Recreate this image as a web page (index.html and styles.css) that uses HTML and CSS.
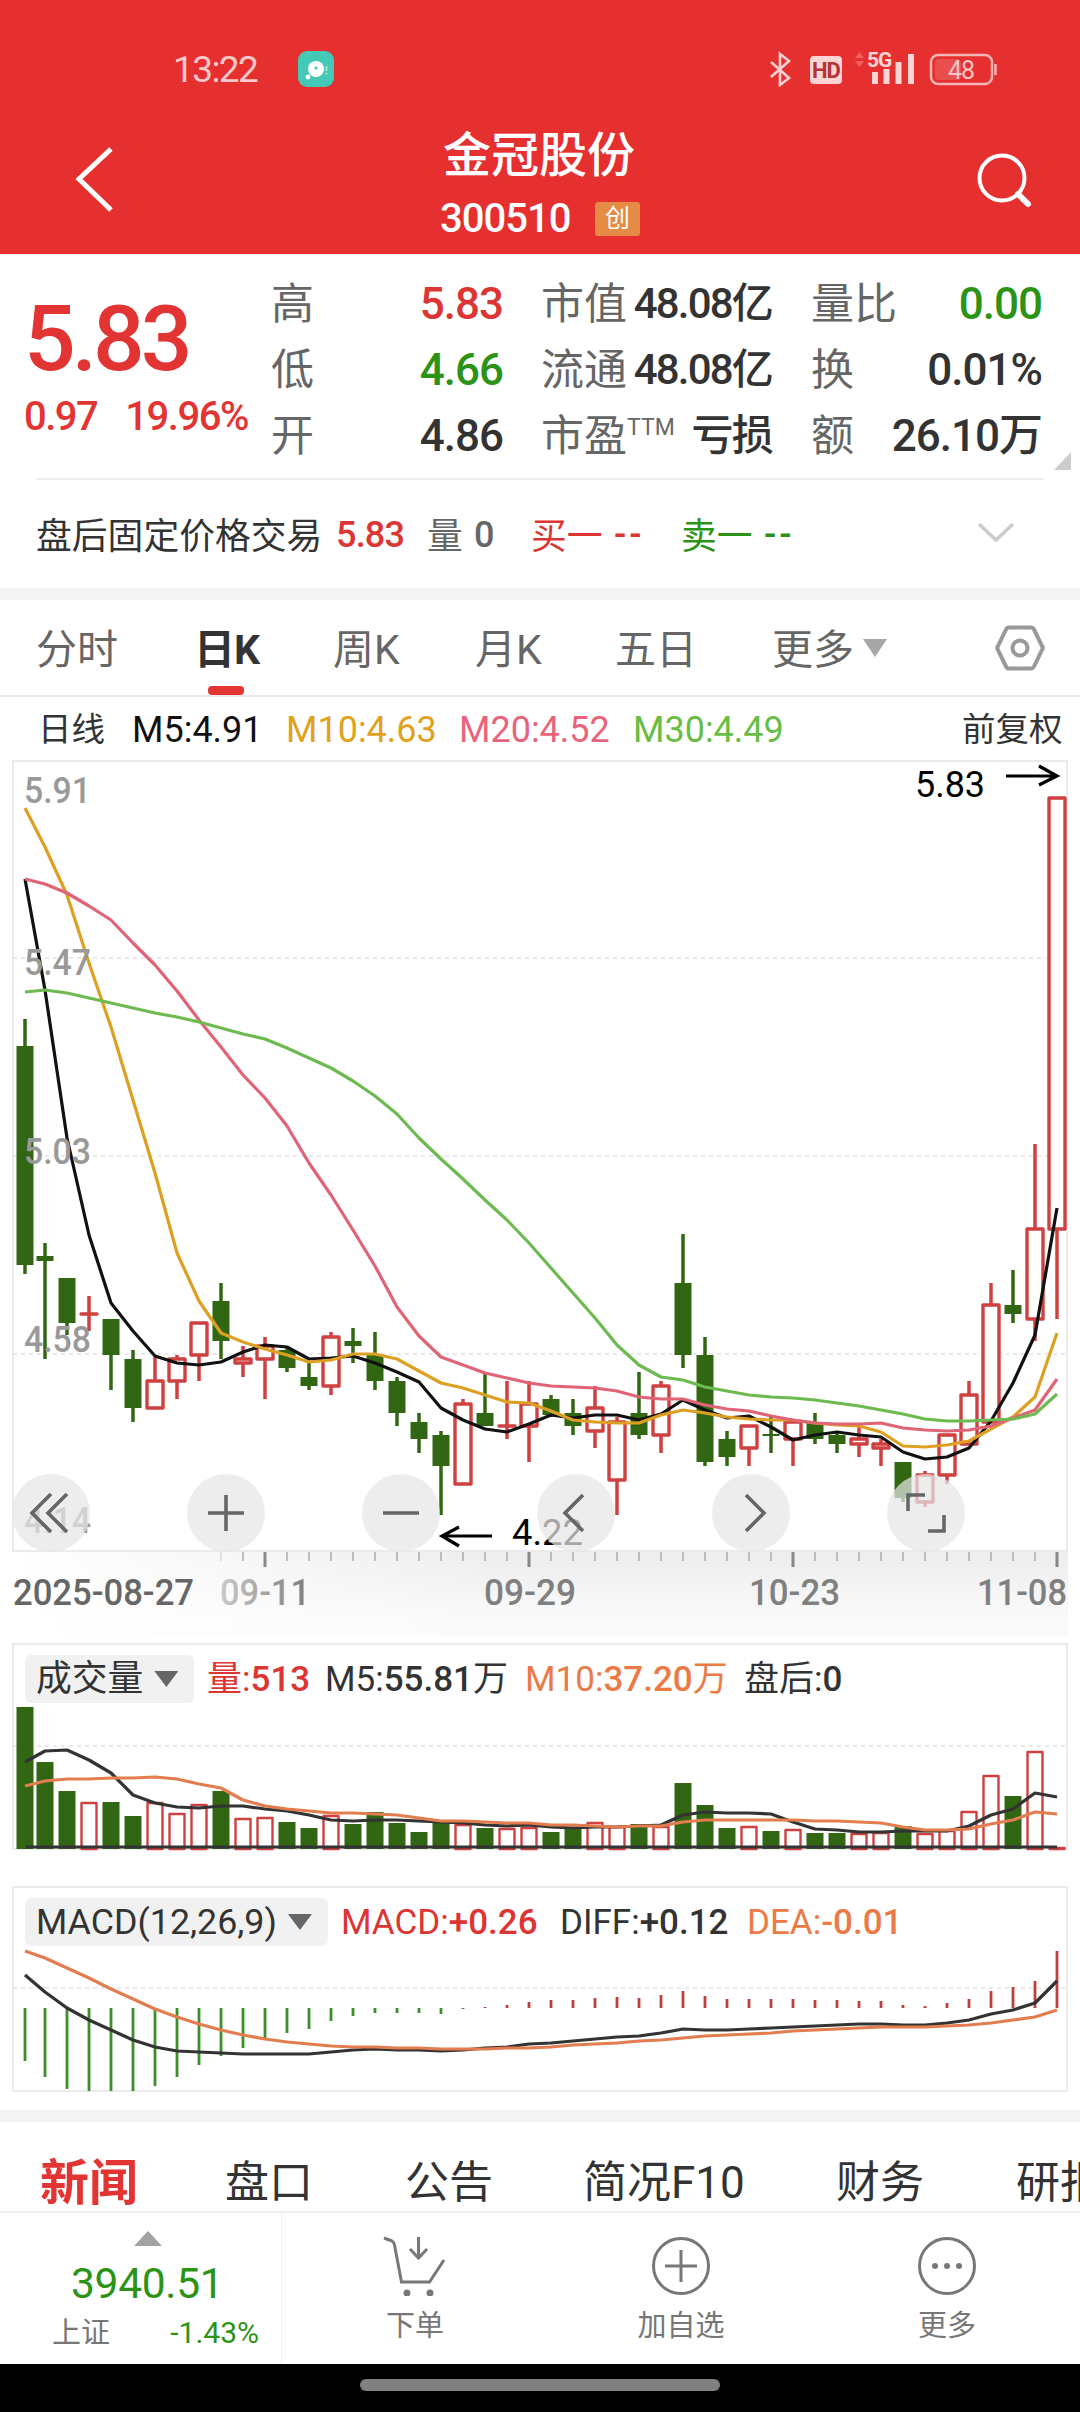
FILE: index.html
```html
<!DOCTYPE html>
<html lang="zh-CN">
<head>
  <meta charset="UTF-8">
  <title>金冠股份 300510</title>
  <link rel="stylesheet" href="styles.css">
</head>
<body>
  <header class="header">
    <div class="status">
      <span class="time">13:22</span>
      <svg class="app-icon" width="36" height="36" viewBox="0 0 36 36">
        <rect width="36" height="36" rx="9" fill="#43c9b6"/>
        <circle cx="18" cy="18" r="8" fill="#fff"/>
        <circle cx="18" cy="17" r="1.6" fill="#43c9b6"/>
        <circle cx="10" cy="26" r="2.4" fill="#fff"/>
        <path d="M28.500 15v5M28.500 22v1.500" stroke="#b5ebe3" stroke-width="1.500"/>
      </svg>
      <svg class="status-icons" width="230" height="40" viewBox="768 47 230 40">
        <path d="M771 62l18 16-9 7V54l9 7-18 16" fill="none" stroke="#fad0d0" stroke-width="2.600"/>
        <rect x="810" y="56" width="32" height="28" rx="4" fill="#fbd5d5"/>
        <text x="826" y="78" class="hd">HD</text>
        <path d="M855 58l4.500-6 4.500 6zM855 61l4.500 6 4.500-6z" fill="#ee6262"/>
        <text x="867" y="67" class="net">5G</text>
        <path d="M875 72v12M886.500 69v15M898.500 62v22M911 54v30" stroke="#fbd5d5" stroke-width="6"/>
        <rect x="931" y="55" width="61" height="29" rx="7" fill="none" stroke="#f6b4b4" stroke-width="2.500"/>
        <rect x="935" y="59" width="26" height="21" rx="4" fill="#ea4f4f"/>
        <path d="M995.500 64v11" stroke="#f6b4b4" stroke-width="2.500"/>
        <text x="961" y="79" class="battery">48</text>
      </svg>
    </div>
    <div class="titlebar">
      <svg width="46" height="70" viewBox="72 144 46 70">
        <path d="M111 149L79 179l32 31" fill="none" stroke="#fff" stroke-width="5"/>
      </svg>
      <div class="title">
        <h1>金冠股份</h1>
        <p><span class="code">300510</span><span class="badge">创</span></p>
      </div>
      <svg width="60" height="60" viewBox="976 151 60 60">
        <circle cx="1002" cy="178" r="22.500" fill="none" stroke="#fff" stroke-width="4"/>
        <path d="M1018 194l10 10" stroke="#fff" stroke-width="6" stroke-linecap="round"/>
      </svg>
    </div>
  </header>

  <section class="quote">
    <div class="price">
      <strong>5.83</strong>
      <p><span>0.97</span><span>19.96%</span></p>
    </div>
    <dl class="col">
      <div><dt>高</dt><dd class="up">5.83</dd></div>
      <div><dt>低</dt><dd class="down">4.66</dd></div>
      <div><dt>开</dt><dd>4.86</dd></div>
    </dl>
    <dl class="col tight">
      <div><dt>市值</dt><dd>48.08亿</dd></div>
      <div><dt>流通</dt><dd>48.08亿</dd></div>
      <div><dt>市盈<sup>TTM</sup></dt><dd>亏损</dd></div>
    </dl>
    <dl class="col">
      <div><dt>量比</dt><dd class="down">0.00</dd></div>
      <div><dt>换</dt><dd>0.01%</dd></div>
      <div><dt>额</dt><dd>26.10万</dd></div>
    </dl>
    <i class="corner"></i>
  </section>

  <section class="after-hours">
    <span>盘后固定价格交易</span>
    <b class="up">5.83</b>
    <span class="grey">量</span>
    <b class="grey">0</b>
    <span class="up">买一</span>
    <b class="up dash">--</b>
    <span class="down">卖一</span>
    <b class="down dash">--</b>
    <svg width="38" height="22" viewBox="0 0 38 22"><path d="M2 2l17 16L36 2" fill="none" stroke="#ccc" stroke-width="3.500"/></svg>
  </section>

  <nav class="periods">
    <a>分时</a>
    <a class="active">日K</a>
    <a>周K</a>
    <a>月K</a>
    <a>五日</a>
    <a>更多<svg width="24" height="18"><path d="M0 0h24L12 18z" fill="#a6a6a6"/></svg></a>
    <svg width="52" height="48" viewBox="-26 -24 52 48">
      <path d="M-11-20.500h22q2 0 3 2L22-2q1.500 2 0 4L14 18.500q-1 2-3 2h-22q-2 0-3-2L-22 2q-1.500-2 0-4l8-16.500q1-2 3-2z" fill="none" stroke="#999" stroke-width="4"/>
      <circle r="7.500" fill="none" stroke="#999" stroke-width="4"/>
    </svg>
  </nav>

  <div class="ma-legend">
    <span class="name">日线</span>
    <span class="m5">M5:4.91</span>
    <span class="m10">M10:4.63</span>
    <span class="m20">M20:4.52</span>
    <span class="m30">M30:4.49</span>
    <span class="adjust">前复权</span>
  </div>

  <div class="kline">
    <svg id="kline" width="1056" height="792" viewBox="12 760 1056 792"></svg>
    <div class="tools">
      <button><svg viewBox="-39 -39 78 78"><path d="M0-19l-19 19L0 19M16-19L-3 0l19 19"/></svg></button>
      <button><svg viewBox="-39 -39 78 78"><path d="M-18 0h36M0-18v36"/></svg></button>
      <button><svg viewBox="-39 -39 78 78"><path d="M-18 0h36"/></svg></button>
      <button><svg viewBox="-39 -39 78 78"><path d="M7-18L-11 0 7 18"/></svg></button>
      <button><svg viewBox="-39 -39 78 78"><path d="M-5-18L13 0-5 18"/></svg></button>
      <button><svg viewBox="-39 -39 78 78"><path d="M-1-18h-17V-2M18 2v16H2"/></svg></button>
    </div>
  </div>
  <svg id="axis" class="axis" width="1056" height="84" viewBox="12 1552 1056 84"></svg>

  <section class="panel volume">
    <div class="panel-head">
      <span class="select">成交量<i></i></span>
      <span class="up">量:<b>513</b></span>
      <span>M5:<b>55.81</b>万</span>
      <span class="orange">M10:<b>37.20</b>万</span>
      <span>盘后:<b>0</b></span>
    </div>
    <svg id="volume" width="1056" height="148" viewBox="12 1703 1056 148"></svg>
  </section>

  <section class="panel macd">
    <div class="panel-head">
      <span class="select">MACD(12,26,9)<i></i></span>
      <span class="up">MACD:<b>+0.26</b></span>
      <span>DIFF:<b>+0.12</b></span>
      <span class="orange">DEA:<b>-0.01</b></span>
    </div>
    <svg id="macd" width="1056" height="146" viewBox="12 1946 1056 146"></svg>
  </section>

  <nav class="sections">
    <a class="active">新闻</a>
    <a>盘口</a>
    <a>公告</a>
    <a>简况F10</a>
    <a>财务</a>
    <a>研报</a>
  </nav>

  <footer class="bottom">
    <div class="index">
      <svg width="28" height="15"><path d="M0 15h28L14 0z" fill="#a3a3a3"/></svg>
      <strong>3940.51</strong>
      <p><span>上证</span><em>-1.43%</em></p>
    </div>
    <a>
      <svg width="64" height="60" viewBox="-32 -30 64 60">
        <path d="M-31-28l8 3q2 1 2.500 4l7 37h28L29-6M3.500-29v20M-5-17l8.500 9 8.500-9"/>
        <circle class="dot" cx="-8" cy="27" r="3.500"/><circle class="dot" cx="15" cy="27" r="3.500"/>
      </svg>
      下单
    </a>
    <a>
      <svg width="60" height="60" viewBox="-30 -30 60 60"><circle r="27.500"/><path d="M-16 0h32M0-16v32"/></svg>
      加自选
    </a>
    <a>
      <svg width="60" height="60" viewBox="-30 -30 60 60"><circle r="27.500"/>
        <circle class="dot" cx="-12" r="3"/><circle class="dot" r="3"/><circle class="dot" cx="12" r="3"/></svg>
      更多
    </a>
  </footer>
  <div class="home"><i></i></div>

  <script src="chart.js"></script>
</body>
</html>
```
FILE: styles.css
```css
* {
  box-sizing: border-box;
  margin: 0;
  padding: 0;
}
body {
  width: 1080px;
  height: 2412px;
  overflow: hidden;
  background: #fff;
  color: #333;
  font-family: Roboto, "Noto Sans CJK SC", sans-serif;
  white-space: nowrap;
}
svg {
  display: block;
}
b, strong, h1, em, i {
  font-weight: inherit;
  font-style: normal;
}
.up { color: #dd3434; }
.down { color: #2b9316; }
.grey { color: #666; }
.orange { color: #ec7a45; }

/* header */
.header {
  height: 254px;
  background: #e62f2f;
  color: #fff;
}
.status {
  height: 127px;
  padding: 51px 82px 0 173px;
  display: flex;
  align-items: flex-start;
}
.time {
  width: 125px;
  font-size: 37px;
  line-height: 38px;
  letter-spacing: -1.6px;
  color: #fbc9c9;
}
.status-icons {
  margin: -4px 0 0 auto;
}
.hd, .net, .battery {
  font-size: 22px;
  font-weight: 700;
  text-anchor: middle;
  letter-spacing: -1px;
  fill: #b53434;
}
.net {
  font-size: 21px;
  text-anchor: start;
  fill: #fbd5d5;
}
.battery {
  font-size: 25px;
  font-weight: 400;
  fill: #f9c4c4;
}
.titlebar {
  display: flex;
  padding: 0 44px 0 72px;
}
.titlebar > svg {
  margin-top: 17px;
}
.titlebar > svg:last-child {
  margin: 24px 0 0 auto;
}
.title {
  width: 200px;
  margin-left: 322px;
}
.title h1 {
  margin-left: 3px;
  font-size: 48px;
  font-weight: 500;
  line-height: 58px;
}
.title p {
  display: flex;
  align-items: center;
  margin-top: 11px;
}
.code {
  width: 155px;
  font-size: 40px;
  font-weight: 500;
  line-height: 46px;
  letter-spacing: -1px;
}
.badge {
  width: 45px;
  height: 34px;
  border-radius: 3px;
  background: #e58b45;
  font-size: 25px;
  line-height: 33px;
  text-align: center;
}

/* quote */
.quote {
  position: relative;
  display: grid;
  grid-template-columns: 196px 231px 231px 230px;
  column-gap: 39px;
  height: 226px;
  margin: 0 36px;
  padding-top: 17px;
  border-bottom: 2px solid #eee;
}
.price {
  margin-left: -12px;
  color: #e33434;
}
.price strong {
  display: block;
  margin-top: 18px;
  font-size: 91px;
  font-weight: 500;
  line-height: 100px;
  letter-spacing: -4px;
}
.price p {
  display: flex;
  gap: 28px;
  margin-top: 4px;
  font-size: 40px;
  font-weight: 500;
  letter-spacing: -1.5px;
}
.col div {
  display: flex;
  justify-content: space-between;
  height: 66px;
  line-height: 66px;
}
.col dt {
  font-size: 43px;
  color: #666;
}
.col dd {
  margin-right: -1px;
  font-size: 44px;
  font-weight: 500;
  letter-spacing: -1px;
}
.col.tight dd {
  margin-right: 0;
  font-size: 42px;
  letter-spacing: -1.8px;
}
.col sup {
  font-size: 23px;
  line-height: 0;
  vertical-align: 16px;
}
.corner {
  position: absolute;
  right: -27px;
  bottom: 8px;
  width: 17px;
  height: 18px;
  background: #ccc;
  clip-path: polygon(100% 0, 100% 100%, 0 100%);
}
.after-hours {
  display: grid;
  grid-template-columns: 300px 91px 47px 57px 83px 67px 83px 213px 38px;
  align-items: center;
  height: 120px;
  padding: 0 36px 3px;
  border-bottom: 12px solid #f4f4f4;
  font-size: 35.800px;
}
.after-hours b {
  padding-top: 4px;
  font-size: 36px;
  font-weight: 500;
  letter-spacing: -.8px;
}
.after-hours .dash {
  letter-spacing: 3px;
}

/* period tabs */
.periods {
  display: grid;
  grid-template-columns: 161px 136px 142px 140px 157px 222px 52px;
  align-items: center;
  height: 97px;
  padding-left: 36px;
  border-bottom: 2px solid #e8e8e8;
  font-size: 41px;
  color: #666;
}
.periods a {
  height: 95px;
  line-height: 100px;
}
.periods .active {
  display: flex;
  flex-direction: column;
  margin-left: -3px;
  font-weight: 700;
  letter-spacing: -1px;
  color: #333;
}
.periods .active::after {
  content: "";
  flex: none;
  width: 36px;
  height: 9px;
  margin: -14px 0 0 14px;
  border-radius: 4px;
  background: #e33434;
}
.periods a svg {
  display: inline-block;
  margin: 0 0 7px 9px;
}
.ma-legend {
  display: grid;
  grid-template-columns: 94px 154px 173px 174px 329px 100px;
  height: 64px;
  padding: 1px 0 0 38px;
  line-height: 64px;
  font-size: 36px;
}
.ma-legend .name, .ma-legend .adjust {
  font-size: 33.500px;
}
.m5 { color: #111; }
.m10 { color: #e2a11d; }
.m20 { color: #e8647a; }
.m30 { color: #68bd45; }

/* charts */
.kline {
  position: relative;
  height: 792px;
  margin: -1px 12px 0;
}
.tools {
  position: absolute;
  left: 0;
  right: 0;
  top: 714px;
  display: flex;
  justify-content: space-between;
  padding-right: 103px;
}
.tools button {
  width: 78px;
  height: 78px;
  border: 0;
  border-radius: 50%;
  background: rgba(230, 230, 230, .72);
}
.tools path {
  fill: none;
  stroke: #666;
  stroke-width: 3.600;
}
.axis {
  margin-left: 12px;
  background: linear-gradient(90deg, #fff 0, rgba(255, 255, 255, 0) 480px), linear-gradient(#ededed, #fafafa 80%);
}
.frame { fill: none; stroke: #ebebeb; stroke-width: 2; }
.grid { stroke: #e9e9e9; stroke-width: 2; stroke-dasharray: 4 4; }
.fall { fill: #316713; }
.rise { fill: #fff; stroke: #cf4040; stroke-width: 3.400; stroke-linejoin: round; }
.thin { stroke-width: 2.400; }
.wick { stroke-width: 3.500; fill: none; }
.fall.wick { stroke: #316713; }
.line { fill: none; stroke-width: 3.200; stroke-linejoin: round; }
.tick { stroke: #999; stroke-width: 1.200; }
.tick.major { stroke: #888; stroke-width: 3; }
.scale, .date {
  font-size: 36.500px;
  font-weight: 500;
  fill: #999;
}
.date { fill: #808080; }
.date.first { fill: #666; }
.date.fading { fill: url(#fade); }
.mark { font-size: 37px; fill: #000; }
.arrow { fill: none; stroke: #000; stroke-width: 3.200; }

.panel {
  height: 208px;
  margin: 7px 12px 0;
}
.panel.macd {
  margin-top: 35px;
}
.panel-head {
  display: grid;
  grid-template-columns: 182px 118px 200px 219px 110px;
  height: 60px;
  padding: 10px 0 0 11px;
  border: solid #ebebeb;
  border-width: 2px 2px 0;
  line-height: 49px;
  font-size: 35px;
}
.panel-head b {
  font-weight: 500;
}
.macd .panel-head {
  grid-template-columns: 316px 219px 187px 160px;
}
.panel-head .select {
  display: flex;
  align-items: center;
  justify-self: start;
  gap: 11px;
  height: 48px;
  padding: 0 16px 0 11px;
  border-radius: 6px;
  background: #f1f1f1;
  font-size: 35.800px;
}
.select i {
  width: 24px;
  height: 16px;
  background: #666;
  clip-path: polygon(0 0, 100% 0, 50% 100%);
}

/* bottom */
.sections {
  display: grid;
  grid-template-columns: 185px 180px 178px 253px 180px 100px;
  align-items: center;
  height: 103px;
  margin-top: 16px;
  padding: 34px 0 0 40px;
  border-top: 12px solid #f4f4f4;
  border-bottom: 2px solid #eee;
  font-size: 44px;
  line-height: 55px;
}
.sections .active {
  font-size: 49px;
  font-weight: 700;
  color: #e33434;
}
.bottom {
  display: grid;
  grid-template-columns: 282px 266px 266px 266px;
  height: 151px;
}
.bottom > a {
  display: flex;
  flex-direction: column;
  align-items: center;
  padding-top: 23px;
  font-size: 29px;
  line-height: 61px;
  color: #777;
}
.bottom a svg {
  fill: none;
  stroke: #777;
  stroke-width: 3;
}
.bottom .dot {
  fill: #777;
  stroke: none;
}
.index {
  border-right: 1px solid #eee;
}
.index svg {
  margin: 18px 0 0 134px;
}
.index strong {
  display: block;
  margin: 10px 0 0 71px;
  font-size: 42.500px;
  line-height: 56px;
  letter-spacing: -.3px;
  color: #2b9316;
}
.index p {
  display: flex;
  justify-content: space-between;
  padding: 4px 22px 0 52px;
  font-size: 29px;
  line-height: 34px;
  color: #777;
}
.index em {
  font-size: 30px;
  color: #2b9316;
}
.home {
  height: 48px;
  padding-top: 15px;
  background: #000;
}
.home i {
  display: block;
  width: 360px;
  height: 12px;
  margin: 0 auto;
  border-radius: 6px;
  background: #808080;
}
```
FILE: chart.js
```js
// rows: [direction, high, body top, body bottom, low], y in chart pixels
const candles = [
  ["G",1019,1046,1265,1274], ["G",1243,1256,1261,1359], ["G",1278,1278,1323,1335], ["R",1296,1314,1314,1331],
  ["G",1319,1319,1355,1390], ["G",1350,1359,1408,1422], ["R",1357,1381,1408,1408], ["R",1355,1359,1381,1399],
  ["R",1323,1323,1355,1381], ["G",1283,1301,1341,1359], ["R",1346,1359,1363,1377], ["R",1337,1346,1359,1399],
  ["G",1348,1350,1368,1372], ["G",1361,1377,1386,1390], ["R",1332,1337,1386,1395], ["G",1328,1341,1346,1363],
  ["G",1332,1355,1381,1390], ["G",1377,1381,1413,1426], ["G",1413,1422,1439,1453], ["G",1431,1435,1466,1515],
  ["R",1399,1404,1484,1484], ["G",1373,1413,1426,1426], ["R",1381,1426,1426,1439], ["R",1381,1404,1426,1462],
  ["G",1395,1399,1415,1417], ["G",1399,1413,1426,1435], ["R",1386,1408,1431,1448], ["R",1417,1422,1480,1515],
  ["G",1372,1413,1435,1439], ["R",1381,1386,1435,1453], ["G",1234,1283,1355,1368], ["G",1337,1355,1462,1466],
  ["G",1431,1439,1457,1466], ["R",1426,1426,1448,1466], ["G",1417,1434,1436,1453], ["R",1422,1422,1439,1466],
  ["G",1413,1423,1439,1444], ["G",1433,1435,1444,1453], ["R",1427,1439,1444,1457], ["R",1439,1444,1448,1466],
  ["G",1462,1462,1498,1502], ["R",1471,1475,1502,1507], ["R",1435,1435,1475,1484], ["R",1381,1395,1444,1444],
  ["R",1283,1305,1422,1422], ["G",1270,1305,1314,1323], ["R",1144,1229,1319,1341], ["R",798,798,1229,1319]
];
const ma = [
  ["#111", [879,990,1138,1235,1303,1331,1356,1363,1365,1362,1352,1345,1347,1359,1358,1356,1363,1372,1382,1408,1420,1429,1432,1424,1415,1418,1415,1415,1420,1414,1400,1410,1418,1416,1427,1440,1435,1432,1435,1437,1452,1459,1457,1448,1421,1383,1335,1208]],
  ["#dda022", [808,847,895,963,1027,1100,1173,1253,1301,1333,1342,1349,1355,1362,1360,1354,1354,1359,1371,1383,1388,1395,1402,1403,1411,1420,1422,1423,1423,1415,1410,1413,1417,1419,1420,1420,1423,1425,1426,1432,1446,1447,1445,1441,1429,1417,1397,1333]],
  ["#e06376", [879,884,893,906,920,943,965,991,1020,1047,1075,1098,1126,1163,1195,1230,1266,1307,1336,1357,1365,1373,1378,1383,1386,1387,1388,1391,1397,1399,1399,1405,1409,1411,1416,1420,1423,1424,1424,1423,1428,1430,1431,1430,1426,1418,1410,1379]],
  ["#6dba50", [992,990,993,998,1003,1008,1013,1017,1022,1028,1034,1039,1048,1058,1068,1081,1096,1114,1138,1159,1179,1200,1220,1243,1268,1293,1318,1345,1365,1377,1380,1387,1391,1395,1397,1398,1400,1403,1406,1410,1414,1419,1421,1421,1420,1419,1414,1394]]
];
const volumes = [1707,1762,1791,1803,1802,1816,1803,1814,1805,1791,1819,1818,1822,1828,1816,1824,1812,1823,1832,1823,1825,1828,1829,1828,1832,1827,1823,1827,1824,1827,1783,1805,1828,1827,1831,1830,1833,1833,1834,1833,1826,1834,1831,1812,1776,1796,1752,1848];
const volMa = [
  ["#333", [1762,1751,1750,1760,1773,1795,1803,1807,1808,1806,1806,1809,1811,1815,1820,1821,1820,1820,1821,1822,1823,1825,1826,1825,1827,1828,1827,1827,1826,1825,1815,1812,1813,1813,1814,1822,1829,1830,1832,1832,1831,1831,1831,1826,1815,1809,1793,1797]],
  ["#e37c4e", [1786,1781,1779,1779,1778,1778,1777,1779,1784,1788,1800,1806,1809,1811,1813,1813,1814,1815,1818,1821,1821,1822,1823,1823,1825,1825,1826,1827,1826,1826,1822,1820,1820,1820,1820,1820,1821,1821,1822,1823,1827,1830,1830,1829,1824,1820,1812,1814]]
];
const macdBars = [2061,2077,2089,2091,2091,2091,2086,2077,2065,2056,2048,2038,2033,2029,2021,2016,2013,2013,2013,2014,2009,2007,2005,2002,2000,2000,1998,1997,1998,1995,1991,1996,1999,1999,1999,1999,2000,2000,2001,2001,2005,2006,2003,1999,1991,1987,1981,1951];
const macdLines = [
  ["#333", [1975,1992,2008,2020,2030,2040,2047,2051,2052,2053,2054,2054,2054,2054,2052,2050,2049,2050,2050,2051,2050,2048,2047,2044,2043,2041,2039,2037,2036,2033,2029,2030,2030,2029,2028,2027,2026,2025,2024,2024,2025,2025,2023,2020,2014,2010,2003,1981]],
  ["#e37c4e", [1951,1958,1968,1978,1989,1999,2009,2017,2024,2030,2035,2039,2042,2044,2046,2047,2047,2048,2048,2049,2049,2049,2048,2048,2047,2045,2044,2043,2041,2040,2038,2036,2035,2034,2033,2031,2030,2029,2028,2027,2027,2027,2026,2025,2023,2020,2017,2010]]
];

// the first bar sits slightly off the 22px step
const xAt = i => i === 0 ? 25 : 23 + 22 * i;
const path = (cls, d, extra = "") => `<path class="${cls}" d="${d}" ${extra}/>`;
const rect = (cls, x, y, w, h) => `<rect class="${cls}" x="${x}" y="${y}" width="${w}" height="${h}"/>`;
const text = (cls, x, y, s, w) => `<text class="${cls}" x="${x}" y="${y}" textLength="${w}" lengthAdjust="spacingAndGlyphs">${s}</text>`;
const lines = set => set.map(([color, ys]) =>
  path("line", "M" + ys.map((y, i) => `${xAt(i)} ${y}`).join("L"), `stroke="${color}"`)).join("");

function drawKline() {
  let out = rect("frame", 13, 761, 1054, 790);
  for (const y of [958, 1156, 1354]) out += path("grid", `M13 ${y}H1066`);
  candles.forEach(([dir, high, top, bottom, low], i) => {
    const x = xAt(i);
    if (dir === "G") {
      out += path("fall wick", `M${x} ${high}V${low}`);
      out += rect("fall", x - 8.5, top, 17, bottom - top);
    } else {
      out += path("rise wick", `M${x} ${high}V${top}M${x} ${bottom}V${low}`);
      out += rect("rise", x - 8, top, 16, Math.max(bottom - top, 0.1));
    }
  });
  out += lines(ma);
  [["5.91", 803], ["5.47", 975], ["5.03", 1164], ["4.58", 1352], ["4.14", 1533]]
    .forEach(([s, y]) => out += text("scale", 24, y, s, 67));
  out += text("mark", 915, 797, "5.83", 70) + path("arrow", "M1006 776H1057M1039 766L1057 776L1039 785");
  out += text("mark", 512, 1545, "4.22", 71) + path("arrow", "M492 1536H442M459 1527L442 1536L459 1546");
  document.getElementById("kline").innerHTML = out;
}

function drawAxis() {
  let out = `<linearGradient id="fade" x1="222" x2="306" gradientUnits="userSpaceOnUse">
    <stop stop-color="#c8c8c8"/><stop offset="1" stop-color="#808080"/></linearGradient>`;
  for (let i = 9; i < 48; i++) {
    const major = i % 12 === 11;
    out += path(major ? "tick major" : "tick", `M${xAt(i)} 1552V${major ? 1567 : 1561}`, i === 9 ? `opacity=".4"` : "");
  }
  out += text("date first", 13, 1605, "2025-08-27", 181);
  out += text("date fading", 220, 1605, "09-11", 90);
  out += text("date", 484, 1605, "09-29", 92);
  out += text("date", 749, 1605, "10-23", 91);
  out += text("date", 977, 1605, "11-08", 90);
  document.getElementById("axis").innerHTML = out;
}

function drawVolume() {
  let out = path("frame", "M13 1703V1849H1067V1703") + path("grid", "M13 1746H1066");
  volumes.forEach((y, i) => {
    const x = xAt(i);
    out += candles[i][0] === "G"
      ? rect("fall", x - 8.5, y, 17, 1849 - y)
      : rect("rise thin", x - 7.5, y, 15, 1849 - y);
  });
  out += path("line", "M26 1847H1057", `stroke="#333"`) + lines(volMa);
  document.getElementById("volume").innerHTML = out;
}

function drawMacd() {
  let out = path("frame", "M13 1946V2091H1067V1946") + path("grid", "M13 1988H1066");
  macdBars.forEach((y, i) => {
    out += path("bar", `M${xAt(i)} 2008V${y}`, `stroke="${y > 2008 ? "#3c8f29" : "#bd4040"}" stroke-width="2.8"`);
  });
  out += lines(macdLines);
  document.getElementById("macd").innerHTML = out;
}

drawKline();
drawAxis();
drawVolume();
drawMacd();
```
